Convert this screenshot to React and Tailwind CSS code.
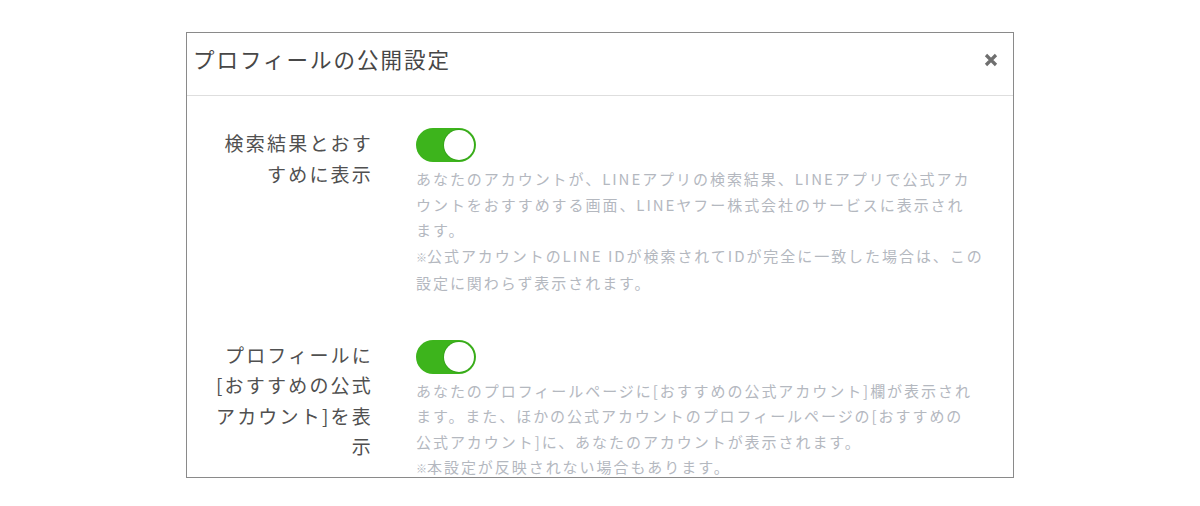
import React, { useState } from "react";

const FONT = { fontFamily: '"Noto Sans CJK JP", "Noto Sans", sans-serif' };

const settings = [
  {
    id: "search",
    label: ["検索結果とおす", "すめに表示"],
    desc: [
      "あなたのアカウントが、LINEアプリの検索結果、LINEアプリで公式アカ",
      "ウントをおすすめする画面、LINEヤフー株式会社のサービスに表示され",
      "ます。",
      <>
        <span className="text-[11px] tracking-[0px]">※</span>
        公式アカウントのLINE IDが検索されてIDが完全に一致した場合は、この
      </>,
      "設定に関わらず表示されます。",
    ],
  },
  {
    id: "profile",
    label: ["プロフィールに", "[おすすめの公式", "アカウント]を表", "示"],
    desc: [
      "あなたのプロフィールページに[おすすめの公式アカウント]欄が表示され",
      "ます。また、ほかの公式アカウントのプロフィールページの[おすすめの",
      "公式アカウント]に、あなたのアカウントが表示されます。",
      <>
        <span className="text-[11px] tracking-[0px]">※</span>
        本設定が反映されない場合もあります。
      </>,
    ],
  },
];

function Toggle({ on, onChange }) {
  return (
    <button
      onClick={onChange}
      className={`relative w-[60px] h-[34px] rounded-full transition ${
        on ? "bg-[#3db41c]" : "bg-[#d6d9de]"
      }`}
    >
      <span
        className={`absolute top-[2px] w-[30px] h-[30px] rounded-full bg-white shadow-[0_0_0_1px_rgba(40,140,20,0.35)] transition-all ${
          on ? "left-[28px]" : "left-[2px]"
        }`}
      />
    </button>
  );
}

export default function App() {
  const [values, setValues] = useState({ search: true, profile: true });

  return (
    <div className="min-h-screen bg-white pt-[32px]" style={FONT}>
      <div className="w-[828px] h-[446px] mx-auto border border-[#8a8a8a] overflow-hidden bg-white">
        {/* Header */}
        <div className="h-[63px] flex items-center justify-between pl-[6px] pr-[12px] pb-[9px] border-b border-[#dedede]">
          <h1 className="text-[21.5px] tracking-[2px] text-[#474747]">
            プロフィールの公開設定
          </h1>
          <button className="w-[20px] h-[20px] flex items-center justify-center">
            <svg width="14" height="14" viewBox="0 0 14 14">
              <path
                d="M2 2 L12 12 M12 2 L2 12"
                stroke="#6f6f6f"
                strokeWidth="3.2"
                strokeLinecap="butt"
              />
            </svg>
          </button>
        </div>

        {/* Body */}
        <div className="pt-[32px] pl-[27px] flex flex-col gap-[44px]">
          {settings.map((s) => (
            <div key={s.id} className="flex">
              <div className="w-[159px] text-right text-[19px] leading-[30.5px] tracking-[2.2px] text-[#505050]">
                {s.label.map((l, i) => (
                  <div key={i} className="whitespace-nowrap">{l}</div>
                ))}
              </div>
              <div className="ml-[43px] flex flex-col">
                <Toggle
                  on={values[s.id]}
                  onChange={() => setValues({ ...values, [s.id]: !values[s.id] })}
                />
                <div className="mt-[4px] text-[15px] leading-[25.5px] tracking-[1.95px] text-[#b4b8bf]">
                  {s.desc.map((l, i) => (
                    <div key={i} className="whitespace-nowrap">{l}</div>
                  ))}
                </div>
              </div>
            </div>
          ))}
        </div>
      </div>
    </div>
  );
}
